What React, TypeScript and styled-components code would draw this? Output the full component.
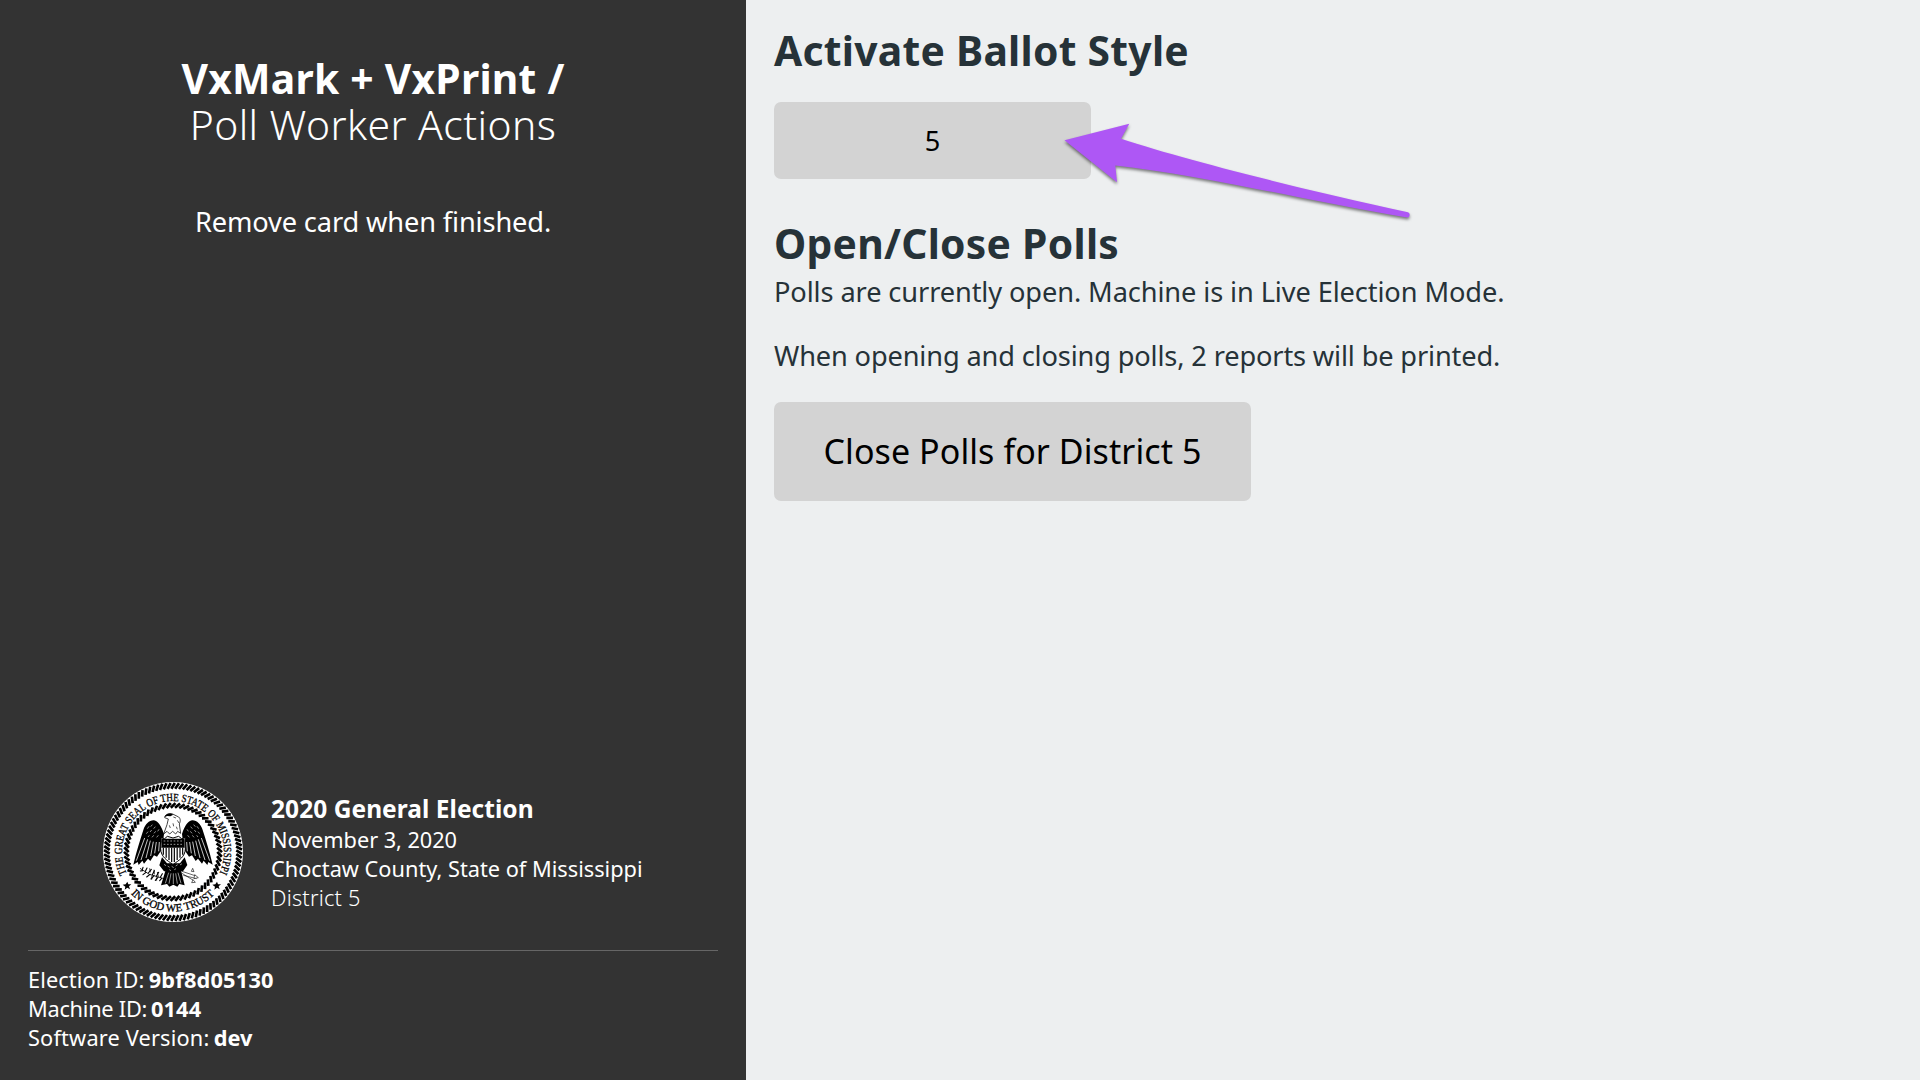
import React from "react";
import styled, { createGlobalStyle } from "styled-components";

const GlobalStyle = createGlobalStyle`
  *, *::before, *::after {
    box-sizing: border-box;
  }
  html, body, #root {
    height: 100%;
  }
  body {
    margin: 0;
    overflow: hidden;
    background: #edeff0;
    color: #263238;
    font-family: "Noto Sans", "Open Sans", sans-serif;
    font-size: 27.2px;
    line-height: 32px;
  }
`;

const Screen = styled.div`
  display: flex;
  width: 100%;
  height: 100%;
`;

const Sidebar = styled.aside`
  display: flex;
  flex-direction: column;
  flex: 0 0 746px;
  padding: 55px 28px 28px;
  background: #333333;
  color: #ffffff;
`;

const SidebarTitle = styled.h1`
  margin: 0;
  font-size: 40.8px;
  line-height: 46px;
  text-align: center;
  letter-spacing: 0.25px;
`;

const Subtitle = styled.span`
  display: block;
  font-weight: 300;
  letter-spacing: 0.44px;
`;

const Instruction = styled.p`
  margin: 57px 0 0;
  line-height: 36px;
  text-align: center;
  letter-spacing: -0.12px;
`;

const ElectionInfo = styled.section`
  display: flex;
  align-items: center;
  gap: 28px;
  height: 140px;
  margin-top: auto;
  padding-left: 75px;
`;

const ElectionText = styled.div`
  font-size: 21.75px;
  line-height: 29px;
`;

const ElectionTitle = styled.h2`
  margin: 0;
  font-size: 24.5px;
  line-height: 32px;
  letter-spacing: 0.05px;
`;

const Line = styled.div<{ $tracking?: number; $light?: boolean }>`
  white-space: nowrap;
  letter-spacing: ${(p) => p.$tracking ?? 0}px;
  font-weight: ${(p) => (p.$light ? 300 : 400)};
`;

const MachineInfo = styled.footer`
  margin-top: 28px;
  padding-top: 14px;
  border-top: 1px solid #666666;
  font-size: 21.75px;
  line-height: 29px;
`;

const Value = styled.strong<{ $tracking?: number }>`
  margin-left: -1.5px;
  letter-spacing: ${(p) => p.$tracking ?? 0}px;
`;

const Main = styled.main`
  display: flex;
  flex-direction: column;
  align-items: flex-start;
  flex: 1;
  padding: 27px 28px;
`;

const Heading = styled.h1<{ $spaced?: boolean }>`
  margin: ${(p) => (p.$spaced ? "41px" : "0")} 0 0;
  font-size: 40.8px;
  line-height: 46px;
  letter-spacing: 0.27px;
`;

const Paragraph = styled.p<{ $gap: number; $tracking: number }>`
  margin: ${(p) => p.$gap}px 0 0;
  letter-spacing: ${(p) => p.$tracking}px;
`;

const Button = styled.button<{ $large?: boolean }>`
  width: ${(p) => (p.$large ? 477 : 317)}px;
  height: ${(p) => (p.$large ? 99 : 77)}px;
  margin: ${(p) => (p.$large ? "30px" : "29px")} 0 0;
  padding: 0 0 ${(p) => (p.$large ? 2 : 0)}px;
  border: 0;
  border-radius: 7px;
  background: #d3d3d3;
  color: #000000;
  font-family: inherit;
  font-size: ${(p) => (p.$large ? 34 : 27.2)}px;
  letter-spacing: ${(p) => (p.$large ? 0.08 : 0)}px;
`;

const ButtonRow = styled.div`
  position: relative;
`;

const Pointer = styled.svg`
  position: absolute;
  left: 286px;
  top: 40px;
  width: 360px;
  height: 96px;
  overflow: visible;
  filter: drop-shadow(0 2px 1.5px rgba(0, 0, 0, 0.5));
`;

const SealArt = styled.svg`
  flex: none;
  width: 140px;
  height: 140px;
`;

const CX = 249;
const CY = 246;

const rope = (count: number, inner: number, outer: number, slant: number) =>
  Array.from({ length: count }, (_, i) => {
    const a = (i / count) * 2 * Math.PI;
    const at = (r: number, t: number) =>
      `${(CX + r * Math.sin(t)).toFixed(1)} ${(CY - r * Math.cos(t)).toFixed(1)}`;
    return `M${at(inner, a - slant)}L${at(outer, a + slant)}`;
  }).join("");

const WING =
  "M222 192C214 168 204 153 192 151C178 150 166 162 160 180C150 211 139 246 130 284L143 276L146 285L157 272L162 281L174 266L181 273L192 256L201 260L216 238Z";

function Wing() {
  return (
    <g>
      <path d={WING} fill="#000" />
      <path
        d="M164 204L139 272M173 208L153 270M181 212L168 264M190 215L182 258M199 216L194 250M208 216L206 244"
        stroke="#fff"
        strokeWidth="2.3"
        fill="none"
      />
      <path
        d="M172 176l5-7M182 170l5-6M191 176l5-6M169 191l5-6M180 186l5-6M192 190l5-6M203 184l4-6M174 201l4-5M186 202l5-6M200 202l5-6"
        stroke="#fff"
        strokeWidth="1.7"
      />
    </g>
  );
}

function Seal() {
  return (
    <SealArt viewBox="39 36 420 420">
      <defs>
        <path id="seal-top" d="M110.3 310.7A153 153 0 1 1 387.7 310.7" />
        <path id="seal-bottom" d="M122 371A178 178 0 0 0 376 371" />
      </defs>
      <circle cx={CX} cy={CY} r="210" fill="#fff" />
      <path d={rope(104, 190, 207, 0.026)} stroke="#000" strokeWidth="8" />
      <path d={rope(66, 133, 147, 0.05)} stroke="#000" strokeWidth="8" />
      <g
        fontFamily='"Liberation Serif", "Times New Roman", serif'
        fontSize="33"
        fill="#000"
        stroke="#000"
        strokeWidth="0.9"
      >
        <text>
          <textPath href="#seal-top" textLength="612" lengthAdjust="spacingAndGlyphs">
            THE GREAT SEAL OF THE STATE OF MISSISSIPPI
          </textPath>
        </text>
        <text>
          <textPath href="#seal-bottom" textLength="280" lengthAdjust="spacingAndGlyphs">
            IN GOD WE TRUST
          </textPath>
        </text>
      </g>
      <path d="M112 335l3 8 9 0-7 6 3 9-8-5-8 6 2-9-8-6 9-1z" />
      <path d="M381 335l3 8 9 0-7 6 3 9-8-5-8 6 2-9-8-6 9-1z" />

      <Wing />
      <g transform="translate(498 0) scale(-1 1)">
        <Wing />
      </g>

      <path
        d="M221 192L231 164L235 147L224 143C226 134 236 128 248 132L266 141C273 147 271 155 268 162L272 190L263 184L257 192L248 184L239 192L231 184Z"
        fill="#fff"
        stroke="#000"
        strokeWidth="2.2"
      />
      <path d="M223 141C230 128 242 129 250 134L241 139L232 138Z" fill="#000" />
      <path d="M250 141l8 3M262 151l5 8M238 166l3 8M249 160l2 9M259 170l3 8" stroke="#000" strokeWidth="2" />

      <path d="M216 262L231 280H270L284 262L292 285L279 304H222L208 286Z" fill="#000" />
      <path d="M228 296H272L284 346L268 342L262 350L250 344L238 350L231 342L213 346Z" fill="#000" />
      <path
        d="M236 308L226 340M243 310L237 341M250 310V342M257 310L262 341M264 308L273 340"
        stroke="#fff"
        strokeWidth="1.7"
      />
      <path
        d="M222 283l6 4M233 288l6 4M245 289l6 4M257 288l6-4M270 285l6-4M238 299l5 3M253 299l5-3"
        stroke="#fff"
        strokeWidth="1.7"
      />

      <path
        d="M213 203L224 206L232 199L249 204L266 199L275 206L286 203C283 214 287 225 286 237C285 260 267 272 249 283C231 272 213 260 212 237C211 225 216 214 213 203Z"
        fill="#fff"
        stroke="#000"
        strokeWidth="3"
      />
      <path d="M216 206H283L284 233H214Z" fill="#000" />
      <path d="M221 213h56M221 223h56" stroke="#fff" strokeWidth="1.8" strokeDasharray="5 5" />
      <path
        d="M220 233V254M228.5 233V263M237 233V270M245 233V276M253 233V276M261.5 233V270M270 233V263M278 233V254"
        stroke="#000"
        strokeWidth="3.6"
      />

      <g stroke="#000" fill="none" strokeWidth="2.4">
        <path d="M150 295L178 313L222 326" />
        <path
          d="M157 299l2-7M166 304l5-10M175 309l9-11M187 314l6-12M199 319l7-12M211 322l6-11M158 302l-7 1M168 307l-9 7M180 313l-10 8M192 317l-9 10M204 322l-8 9M215 325l-6 7"
          strokeWidth="3.4"
          strokeLinecap="round"
        />
        <path d="M181 307l-2-12M193 313l-1-14M186 317l-1 12M205 320l-3-14M199 322l1 10" />
      </g>
      <g stroke="#000" fill="none" strokeWidth="1.8">
        <path d="M276 304L318 318M276 310L310 331M280 316L320 326" />
        <path d="M314 314l11 9-13 3zM309 329l7 8-11 1zM304 304l4-9 4 10z" fill="#fff" />
      </g>
    </SealArt>
  );
}

function ArrowPointer() {
  return (
    <Pointer viewBox="1060 113 360 96">
      <path
        d="M1064.5 140.2L1129.3 123.8L1121 138.8C1190 161.5 1310 191 1408 212.3A2.7 2.7 0 0 1 1407.2 217.5C1310 201.5 1200 174.5 1115.3 165.4L1117 182.3Z"
        fill="#ae57f5"
      />
    </Pointer>
  );
}

export default function App() {
  return (
    <Screen>
      <GlobalStyle />
      <Sidebar>
        <SidebarTitle>
          VxMark + VxPrint /<Subtitle>Poll Worker Actions</Subtitle>
        </SidebarTitle>
        <Instruction>Remove card when finished.</Instruction>
        <ElectionInfo>
          <Seal />
          <ElectionText>
            <ElectionTitle>2020 General Election</ElectionTitle>
            <Line $tracking={-0.06}>November 3, 2020</Line>
            <Line>Choctaw County, State of Mississippi</Line>
            <Line $light $tracking={0.2}>
              District 5
            </Line>
          </ElectionText>
        </ElectionInfo>
        <MachineInfo>
          <Line $tracking={0.1}>
            Election ID: <Value $tracking={0.2}>9bf8d05130</Value>
          </Line>
          <Line $tracking={-0.25}>
            Machine ID: <Value $tracking={0.1}>0144</Value>
          </Line>
          <Line $tracking={0.17}>
            Software Version: <Value>dev</Value>
          </Line>
        </MachineInfo>
      </Sidebar>
      <Main>
        <Heading>Activate Ballot Style</Heading>
        <ButtonRow>
          <Button>5</Button>
          <ArrowPointer />
        </ButtonRow>
        <Heading $spaced>Open/Close Polls</Heading>
        <Paragraph $gap={10} $tracking={-0.1}>
          Polls are currently open. Machine is in Live Election Mode.
        </Paragraph>
        <Paragraph $gap={32} $tracking={-0.139}>
          When opening and closing polls, 2 reports will be printed.
        </Paragraph>
        <Button $large>Close Polls for District 5</Button>
      </Main>
    </Screen>
  );
}
